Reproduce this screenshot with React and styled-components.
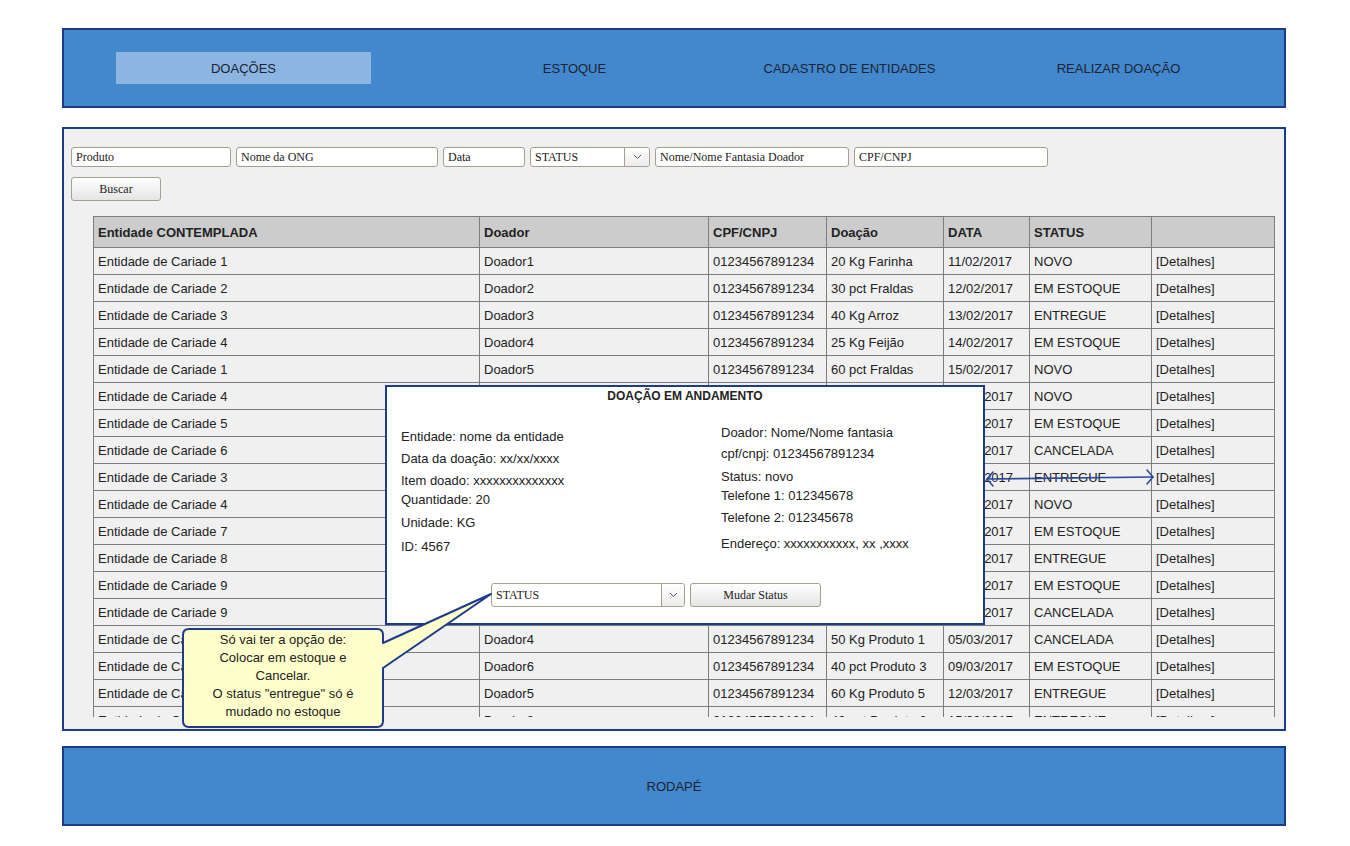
import React from "react";
import styled, { createGlobalStyle } from "styled-components";

const navy = "#1d3b8b";
const blue = "#4387cc";

const GlobalStyle = createGlobalStyle`
  body {
    margin: 0;
    background: #fff;
    font-family: "Liberation Sans", Arial, sans-serif;
    color: #222;
  }
`;

const Page = styled.div`
  width: 1224px;
  margin-left: 62px;
  padding-top: 28px;
`;

const Header = styled.div`
  height: 80px;
  box-sizing: border-box;
  background: ${blue};
  border: 2px solid ${navy};
  display: flex;
  align-items: center;
`;

const NavItem = styled.div`
  width: 255px;
  height: 32px;
  margin-left: ${(p) => p.$ml}px;
  display: flex;
  align-items: center;
  justify-content: center;
  font-size: 13px;
  color: #1c2433;
  background: ${(p) => (p.$active ? "#8cb5e2" : "transparent")};
  white-space: nowrap;
`;

const Main = styled.div`
  position: relative;
  margin-top: 19px;
  height: 604px;
  box-sizing: border-box;
  background: #f0f0f0;
  border: 2px solid ${navy};
  padding: 18px 9px 12px 7px;
  display: flex;
  flex-direction: column;
`;

const Filters = styled.div`
  display: flex;
  gap: 5px;
  height: 20px;
`;

const Input = styled.input`
  width: ${(p) => p.$w}px;
  height: 20px;
  box-sizing: border-box;
  border: 1px solid #a59e92;
  border-radius: 3px;
  background: #fff;
  padding: 0 4px;
  font-family: "Liberation Serif", "Times New Roman", serif;
  font-size: 12px;
  color: #222;
  outline: none;
`;

const SelectBox = styled.div`
  width: ${(p) => p.$w}px;
  height: ${(p) => p.$h}px;
  box-sizing: border-box;
  border: 1px solid #a59e92;
  border-radius: 3px;
  background: #fff;
  display: flex;
  font-family: "Liberation Serif", "Times New Roman", serif;
  font-size: 12px;
`;

const SelectText = styled.div`
  flex: 1;
  display: flex;
  align-items: center;
  padding-left: 4px;
`;

const SelectArrow = styled.div`
  width: ${(p) => p.$aw}px;
  border-left: 1px solid #a59e92;
  background: linear-gradient(#ffffff, #ececec);
  border-radius: 0 2px 2px 0;
  display: flex;
  align-items: center;
  justify-content: center;
`;

const Button = styled.button`
  width: ${(p) => p.$w}px;
  height: 24px;
  box-sizing: border-box;
  border: 1px solid #a59e92;
  border-radius: 3px;
  background: linear-gradient(#ffffff, #e4e4e4);
  font-family: "Liberation Serif", "Times New Roman", serif;
  font-size: 12px;
  color: #222;
  padding: 0;
`;

const SearchRow = styled.div`
  margin-top: 10px;
`;

const TableWrap = styled.div`
  margin: 15px 0 0 22px;
  height: 501px;
  overflow: hidden;
`;

const Table = styled.table`
  width: 1181px;
  table-layout: fixed;
  border-collapse: collapse;
  font-size: 13px;
`;

const Th = styled.th`
  height: 30px;
  background: #cccccc;
  border: 1px solid #7d7d7d;
  text-align: left;
  padding: 0 4px;
  font-weight: bold;
  color: #222;
`;

const Td = styled.td`
  height: 26px;
  border: 1px solid #7d7d7d;
  padding: 0 4px;
  white-space: nowrap;
  overflow: hidden;
  color: #222;
`;

const Modal = styled.div`
  position: absolute;
  left: 321px;
  top: 256px;
  width: 600px;
  height: 240px;
  box-sizing: border-box;
  background: #fff;
  border: 2px solid ${navy};
  display: flex;
  flex-direction: column;
  z-index: 2;
`;

const ModalTitle = styled.div`
  padding-top: 2px;
  text-align: center;
  font-size: 12px;
  line-height: 15px;
  font-weight: bold;
  color: #222;
`;

const ModalBody = styled.div`
  display: grid;
  grid-template-columns: 320px 1fr;
  padding-left: 14px;
  margin-top: 20px;
  font-size: 13px;
  line-height: 18px;
`;

const Col = styled.div`
  display: flex;
  flex-direction: column;
  padding-top: ${(p) => p.$pt || 0}px;
`;

const Line = styled.div`
  margin-top: ${(p) => p.$mt || 0}px;
  white-space: nowrap;
`;

const ModalActions = styled.div`
  margin-top: auto;
  padding: 0 0 16px 104px;
  display: flex;
  gap: 5px;
`;

const Callout = styled.div`
  position: absolute;
  left: 118px;
  top: 460px;
  width: 312px;
  height: 141px;
  z-index: 3;

  svg {
    position: absolute;
    left: 0;
    top: 0;
  }
`;

const CalloutText = styled.div`
  position: relative;
  margin: 42px 0 0 1px;
  width: 200px;
  text-align: center;
  font-size: 13px;
  line-height: 18px;
  color: #222;
`;

const LinkArrow = styled.svg`
  position: absolute;
  left: 916px;
  top: 339px;
  z-index: 3;
`;

const Footer = styled.div`
  margin-top: 15px;
  height: 80px;
  box-sizing: border-box;
  background: ${blue};
  border: 2px solid ${navy};
  display: flex;
  align-items: center;
  justify-content: center;
  font-size: 13px;
  color: #1c2433;
`;

const Chevron = () => (
  <svg width="9" height="6" viewBox="0 0 9 6">
    <polyline points="1,1 4.5,4.5 8,1" fill="none" stroke="#555" strokeWidth="1" />
  </svg>
);

const cpf = "01234567891234";

const rows = [
  ["Entidade de Cariade 1", "Doador1", "20 Kg Farinha", "11/02/2017", "NOVO"],
  ["Entidade de Cariade 2", "Doador2", "30 pct Fraldas", "12/02/2017", "EM ESTOQUE"],
  ["Entidade de Cariade 3", "Doador3", "40 Kg Arroz", "13/02/2017", "ENTREGUE"],
  ["Entidade de Cariade 4", "Doador4", "25 Kg Feijão", "14/02/2017", "EM ESTOQUE"],
  ["Entidade de Cariade 1", "Doador5", "60 pct Fraldas", "15/02/2017", "NOVO"],
  ["Entidade de Cariade 4", "Doador6", "10 Kg Açúcar", "16/02/2017", "NOVO"],
  ["Entidade de Cariade 5", "Doador7", "15 Kg Arroz", "17/02/2017", "EM ESTOQUE"],
  ["Entidade de Cariade 6", "Doador1", "20 pct Fraldas", "18/02/2017", "CANCELADA"],
  ["Entidade de Cariade 3", "Doador2", "30 Kg Feijão", "19/02/2017", "ENTREGUE"],
  ["Entidade de Cariade 4", "Doador3", "12 Kg Farinha", "20/02/2017", "NOVO"],
  ["Entidade de Cariade 7", "Doador4", "18 Kg Arroz", "21/02/2017", "EM ESTOQUE"],
  ["Entidade de Cariade 8", "Doador5", "22 pct Fraldas", "22/02/2017", "ENTREGUE"],
  ["Entidade de Cariade 9", "Doador6", "35 Kg Feijão", "23/02/2017", "EM ESTOQUE"],
  ["Entidade de Cariade 9", "Doador7", "45 Kg Farinha", "24/02/2017", "CANCELADA"],
  ["Entidade de Cariade 10", "Doador4", "50 Kg Produto 1", "05/03/2017", "CANCELADA"],
  ["Entidade de Cariade 11", "Doador6", "40 pct Produto 3", "09/03/2017", "EM ESTOQUE"],
  ["Entidade de Cariade 12", "Doador5", "60 Kg Produto 5", "12/03/2017", "ENTREGUE"],
  ["Entidade de Cariade 13", "Doador8", "40 pct Produto 6", "15/03/2017", "ENTREGUE"],
];

const widths = [386, 229, 118, 117, 86, 122, 123];

export default function App() {
  return (
    <>
      <GlobalStyle />
      <Page>
        <Header>
          <NavItem $ml={52} $active>DOAÇÕES</NavItem>
          <NavItem $ml={76}>ESTOQUE</NavItem>
          <NavItem $ml={20}>CADASTRO DE ENTIDADES</NavItem>
          <NavItem $ml={14}>REALIZAR DOAÇÃO</NavItem>
        </Header>

        <Main>
          <Filters>
            <Input $w={160} defaultValue="Produto" />
            <Input $w={202} defaultValue="Nome da ONG" />
            <Input $w={82} defaultValue="Data" />
            <SelectBox $w={120} $h={20}>
              <SelectText>STATUS</SelectText>
              <SelectArrow $aw={24}>
                <Chevron />
              </SelectArrow>
            </SelectBox>
            <Input $w={194} defaultValue="Nome/Nome Fantasia Doador" />
            <Input $w={194} defaultValue="CPF/CNPJ" />
          </Filters>

          <SearchRow>
            <Button $w={90}>Buscar</Button>
          </SearchRow>

          <TableWrap>
            <Table>
              <colgroup>
                {widths.map((w, i) => (
                  <col key={i} style={{ width: w }} />
                ))}
              </colgroup>
              <thead>
                <tr>
                  <Th>Entidade CONTEMPLADA</Th>
                  <Th>Doador</Th>
                  <Th>CPF/CNPJ</Th>
                  <Th>Doação</Th>
                  <Th>DATA</Th>
                  <Th>STATUS</Th>
                  <Th></Th>
                </tr>
              </thead>
              <tbody>
                {rows.map((r, i) => (
                  <tr key={i}>
                    <Td>{r[0]}</Td>
                    <Td>{r[1]}</Td>
                    <Td>{cpf}</Td>
                    <Td>{r[2]}</Td>
                    <Td>{r[3]}</Td>
                    <Td>{r[4]}</Td>
                    <Td>[Detalhes]</Td>
                  </tr>
                ))}
              </tbody>
            </Table>
          </TableWrap>

          <Modal>
            <ModalTitle>DOAÇÃO EM ANDAMENTO</ModalTitle>
            <ModalBody>
              <Col $pt={4}>
                <Line>Entidade: nome da entidade</Line>
                <Line $mt={4}>Data da doação: xx/xx/xxxx</Line>
                <Line $mt={4}>Item doado: xxxxxxxxxxxxxx</Line>
                <Line $mt={1}>Quantidade: 20</Line>
                <Line $mt={5}>Unidade: KG</Line>
                <Line $mt={6}>ID: 4567</Line>
              </Col>
              <Col>
                <Line>Doador: Nome/Nome fantasia</Line>
                <Line $mt={3}>cpf/cnpj: 01234567891234</Line>
                <Line $mt={5}>Status: novo</Line>
                <Line $mt={1}>Telefone 1: 012345678</Line>
                <Line $mt={4}>Telefone 2: 012345678</Line>
                <Line $mt={8}>Endereço: xxxxxxxxxxx, xx ,xxxx</Line>
              </Col>
            </ModalBody>
            <ModalActions>
              <SelectBox $w={194} $h={24}>
                <SelectText>STATUS</SelectText>
                <SelectArrow $aw={22}>
                  <Chevron />
                </SelectArrow>
              </SelectBox>
              <Button $w={131}>Mudar Status</Button>
            </ModalActions>
          </Modal>

          <Callout>
            <svg width="312" height="141" viewBox="0 0 312 141">
              <path
                d="M7,40 H195 Q201,40 201,46 V54 L309,5 L201,79 V132 Q201,138 195,138 H7 Q1,138 1,132 V46 Q1,40 7,40 Z"
                fill="#ffffcc"
                stroke={navy}
                strokeWidth="2"
                strokeLinejoin="round"
              />
            </svg>
            <CalloutText>
              Só vai ter a opção de:
              <br />
              Colocar em estoque e
              <br />
              Cancelar.
              <br />
              O status "entregue" só é
              <br />
              mudado no estoque
            </CalloutText>
          </Callout>

          <LinkArrow width="180" height="20" viewBox="0 0 180 20">
            <g fill="none" stroke="#2a4a9e" strokeWidth="1.6" strokeLinecap="round">
              <line x1="7" y1="11" x2="173" y2="9" />
              <polyline points="13,4 7,11 13,18" />
              <polyline points="167,2 173,9 167,16" />
            </g>
          </LinkArrow>
        </Main>

        <Footer>RODAPÉ</Footer>
      </Page>
    </>
  );
}
